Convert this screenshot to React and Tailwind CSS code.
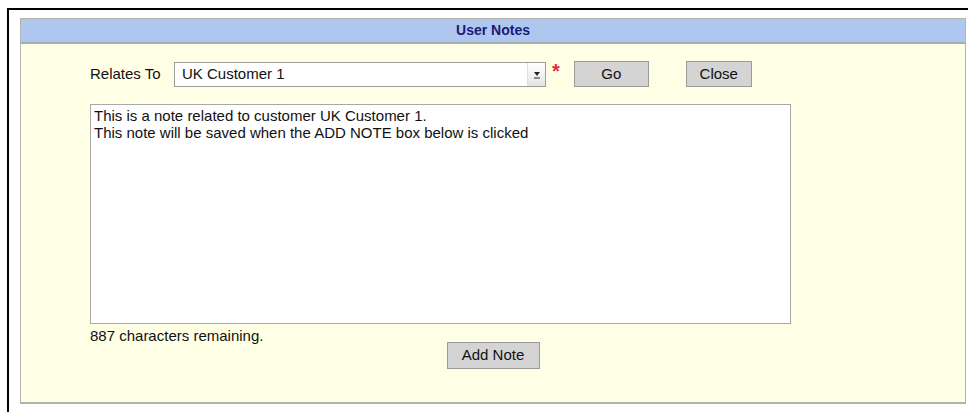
import React from "react"

const font = { fontFamily: '"Liberation Sans", Arial, sans-serif' }

const GrayButton = ({ children, className = "" }) => (
  <button
    type="button"
    className={`h-[26px] border border-[#9a9a9a] bg-[#d4d4d4] text-[15px] text-[#111] ${className}`}
  >
    {children}
  </button>
)

const App = () => {
  return (
    <div className="h-[412px] w-[968px] overflow-hidden bg-white" style={font}>
      <div className="ml-[7px] mt-[8px] h-[404px] border-l-2 border-t-2 border-black pl-[11px] pt-[8px]">
        <div className="flex h-[386px] w-[946px] flex-col border border-[#b4b4ac] border-b-2 bg-[#ffffe6]">
          {/* title bar */}
          <div className="flex h-[25px] items-center justify-center border-b-2 border-[#a4acb8] bg-[#afc7ee]">
            <span className="text-[14px] font-bold text-[#1a1a7a]">User Notes</span>
          </div>

          <div className="flex flex-col pl-[69px]">
            <div className="mt-[17px] flex items-center">
              <span className="w-[84px] text-[15px] text-[#111]">Relates To</span>
              <div className="relative flex h-[25px] w-[372px] items-center border border-[#9c9c9c] bg-white pl-[7px]">
                <span className="text-[15px] text-[#111]">UK Customer 1</span>
                <div className="absolute right-0 top-0 flex h-full w-[18px] items-center justify-center border-l border-[#e0e0e0] bg-gradient-to-b from-white to-[#e4e4e4]">
                  <svg width="8" height="10" viewBox="0 0 8 10">
                    <path d="M1 3h6L4 7z" fill="#222" />
                    <path d="M1 9h6" stroke="#222" strokeWidth="1" />
                  </svg>
                </div>
              </div>
              <span className="ml-[6px] -mt-[6px] text-[20px] font-bold leading-none text-[#e8283c]">*</span>
              <GrayButton className="ml-[14px] w-[75px]">Go</GrayButton>
              <GrayButton className="ml-[37px] w-[66px]">Close</GrayButton>
            </div>

            <div className="mt-[17px] h-[220px] w-[701px] border border-[#a8a8a8] bg-white px-[3px] pt-[2px] text-[15px] leading-[17px] text-[#111]">
              <div>This is a note related to customer UK Customer 1.</div>
              <div>This note will be saved when the ADD NOTE box below is clicked</div>
            </div>

            <div className="mt-[4px] text-[15px] leading-[15px] text-[#111]">887 characters remaining.</div>
          </div>

          <div className="-mt-[1px] flex justify-center">
            <GrayButton className="h-[27px] w-[93px]">Add Note</GrayButton>
          </div>
        </div>
      </div>
    </div>
  )
}

export default App
